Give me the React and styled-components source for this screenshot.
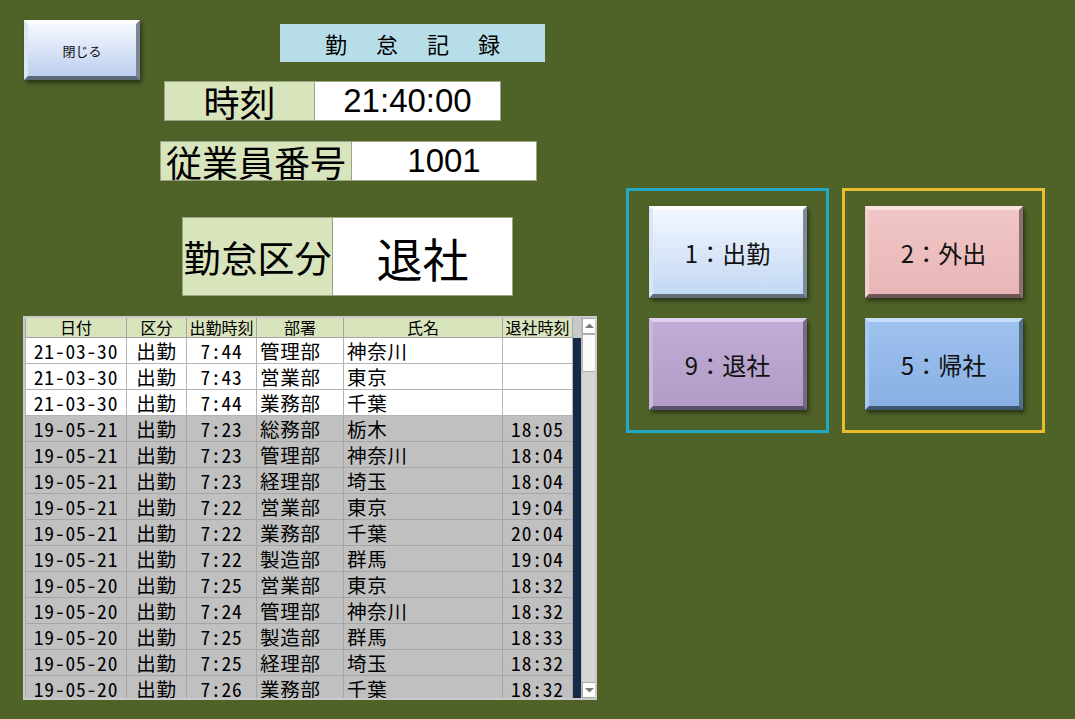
import React from "react";
import styled, { createGlobalStyle } from "styled-components";

const GlobalStyle = createGlobalStyle`
  html, body {
    margin: 0;
    padding: 0;
    background: #4f6228;
  }
  body {
    font-family: "Noto Sans CJK JP", "Liberation Sans", sans-serif;
    color: #000;
  }
`;

const tones = {
  close: { from: "#f6f9ff", to: "#bccfee", hi: "#ffffff", mid: "#dbe5f4", dark: "#7c8696", darker: "#5f6877" },
  ice: { from: "#f2f7fe", to: "#c3d8f3", hi: "#ffffff", mid: "#d9e5f4", dark: "#7f8a99", darker: "#646d7a" },
  rose: { from: "#f1c6c6", to: "#e8b6b6", hi: "#f9e2e2", mid: "#f0cfcf", dark: "#8e7070", darker: "#6e5656" },
  lilac: { from: "#c2acd5", to: "#b09cc6", hi: "#e0d0ec", mid: "#c9b8da", dark: "#75688a", darker: "#5c516d" },
  sky: { from: "#9ec2ef", to: "#89b0e4", hi: "#c6def9", mid: "#a9c8ef", dark: "#53708f", darker: "#3f566f" },
};

const Screen = styled.div`
  width: 1075px;
  height: 719px;
  display: flex;
  overflow: hidden;
  background: #4f6228;
`;

const LeftPane = styled.div`
  width: 600px;
  display: flex;
  flex-direction: column;
`;

const TopBar = styled.div`
  display: flex;
  align-items: flex-start;
  height: 81px;
`;

const BevelButton = styled.button`
  box-sizing: border-box;
  display: flex;
  align-items: center;
  justify-content: center;
  padding: 0;
  border-style: solid;
  border-width: 4px;
  border-color: ${({ $tone }) => `${$tone.hi} ${$tone.dark} ${$tone.darker} ${$tone.mid}`};
  background: linear-gradient(to bottom, ${({ $tone }) => $tone.from}, ${({ $tone }) => $tone.to});
  box-shadow: 2px 3px 4px rgba(0, 0, 0, 0.45);
  font-family: "Noto Sans CJK JP", "Liberation Sans", sans-serif;
  color: #111;
  cursor: pointer;
`;

const CloseButton = styled(BevelButton)`
  width: 116px;
  height: 60px;
  margin: 20px 0 0 24px;
  font-size: 13px;
`;

const Title = styled.div`
  box-sizing: border-box;
  width: 265px;
  height: 38px;
  margin: 24px 0 0 140px;
  padding-left: 12px;
  background: #b7dee8;
  display: flex;
  align-items: center;
  justify-content: center;
  font-size: 22px;
  letter-spacing: 12px;
`;

const InfoRow = styled.div`
  display: flex;
  height: ${({ $h }) => $h}px;
  margin-left: ${({ $x }) => $x}px;
  margin-top: ${({ $top }) => $top}px;
`;

const Label = styled.div`
  box-sizing: border-box;
  width: ${({ $w }) => $w}px;
  background: #d8e4bc;
  border: 1px solid #9aa586;
  display: flex;
  align-items: center;
  justify-content: center;
  font-size: ${({ $size }) => $size}px;
  white-space: nowrap;
`;

const Value = styled.div`
  box-sizing: border-box;
  width: ${({ $w }) => $w}px;
  background: #fff;
  border: 1px solid #9aa586;
  border-left: none;
  display: flex;
  align-items: center;
  justify-content: center;
  font-family: "Liberation Sans", "Noto Sans CJK JP", sans-serif;
  font-size: ${({ $size }) => $size}px;
`;

const TableFrame = styled.div`
  box-sizing: border-box;
  width: 574px;
  height: 384px;
  margin: 20px 0 0 23px;
  border: 2px solid #cacaca;
  display: flex;
  overflow: hidden;
  background: #c0c0c0;
`;

const Grid = styled.table`
  border-collapse: collapse;
  table-layout: fixed;
  width: 547px;
  flex: none;
  align-self: flex-start;
`;

const HeadCell = styled.th`
  height: 19px;
  padding: 0;
  background: #d8e4bc;
  border: 1px solid #a4a4a4;
  border-top: none;
  font-size: 16px;
  font-weight: normal;
  line-height: 19px;
  white-space: nowrap;
`;

const Cell = styled.td`
  height: 25px;
  padding: 0 3px;
  background: ${({ $fresh }) => ($fresh ? "#ffffff" : "#c0c0c0")};
  border: 1px solid ${({ $fresh }) => ($fresh ? "#b4b4b4" : "#a6a6a6")};
  text-align: ${({ $align }) => $align || "center"};
  font-family: "Noto Sans CJK JP", sans-serif;
  font-feature-settings: "hwid";
  font-size: 19.5px;
  letter-spacing: 0.8px;
  line-height: 24px;
  white-space: nowrap;
`;

const Strip = styled.div`
  width: 8px;
  flex: none;
  display: flex;
  flex-direction: column;
`;

const StripHead = styled.div`
  height: 20px;
  background: #c8c8c8;
`;

const StripBody = styled.div`
  flex: 1;
  background: #172a48;
`;

const ScrollTrack = styled.div`
  width: 15px;
  flex: none;
  display: flex;
  flex-direction: column;
  background: #d6d6d6;
  border-left: 1px solid #bdbdbd;
`;

const ScrollArrow = styled.div`
  box-sizing: border-box;
  height: 16px;
  background: #fff;
  border: 1px solid #a8a8a8;
  display: flex;
  align-items: center;
  justify-content: center;
`;

const ScrollThumb = styled.div`
  box-sizing: border-box;
  height: 38px;
  background: #fafafa;
  border: 1px solid #b4b4b4;
`;

const ScrollGap = styled.div`
  flex: 1;
`;

const RightPane = styled.div`
  display: flex;
  align-items: flex-start;
  gap: 13px;
  padding: 188px 0 0 26px;
`;

const Group = styled.div`
  box-sizing: border-box;
  width: 203px;
  height: 245px;
  border: 3px solid ${({ $color }) => $color};
  display: flex;
  flex-direction: column;
  align-items: center;
  gap: 20px;
  padding-top: 15px;
`;

const ActionButton = styled(BevelButton)`
  width: 158px;
  height: 92px;
  font-size: 24px;
`;

const records = [
  ["21-03-30", "出勤", "7:44", "管理部", "神奈川", ""],
  ["21-03-30", "出勤", "7:43", "営業部", "東京", ""],
  ["21-03-30", "出勤", "7:44", "業務部", "千葉", ""],
  ["19-05-21", "出勤", "7:23", "総務部", "栃木", "18:05"],
  ["19-05-21", "出勤", "7:23", "管理部", "神奈川", "18:04"],
  ["19-05-21", "出勤", "7:23", "経理部", "埼玉", "18:04"],
  ["19-05-21", "出勤", "7:22", "営業部", "東京", "19:04"],
  ["19-05-21", "出勤", "7:22", "業務部", "千葉", "20:04"],
  ["19-05-21", "出勤", "7:22", "製造部", "群馬", "19:04"],
  ["19-05-20", "出勤", "7:25", "営業部", "東京", "18:32"],
  ["19-05-20", "出勤", "7:24", "管理部", "神奈川", "18:32"],
  ["19-05-20", "出勤", "7:25", "製造部", "群馬", "18:33"],
  ["19-05-20", "出勤", "7:25", "経理部", "埼玉", "18:32"],
  ["19-05-20", "出勤", "7:26", "業務部", "千葉", "18:32"],
];

const columns = [
  { title: "日付", width: 101 },
  { title: "区分", width: 60 },
  { title: "出勤時刻", width: 70 },
  { title: "部署", width: 87, align: "left" },
  { title: "氏名", width: 159, align: "left" },
  { title: "退社時刻", width: 70 },
];

const Arrow = ({ down }) => (
  <svg width="9" height="6" viewBox="0 0 9 6">
    <polygon points={down ? "0,1 9,1 4.5,5.5" : "0,5 9,5 4.5,0.5"} fill="#7a7a7a" />
  </svg>
);

const AttendanceTable = () => (
  <TableFrame>
    <Grid>
      <colgroup>
        {columns.map((c) => (
          <col key={c.title} style={{ width: c.width }} />
        ))}
      </colgroup>
      <thead>
        <tr>
          {columns.map((c) => (
            <HeadCell key={c.title}>{c.title}</HeadCell>
          ))}
        </tr>
      </thead>
      <tbody>
        {records.map((row, i) => (
          <tr key={i}>
            {row.map((v, j) => (
              <Cell key={j} $fresh={i < 3} $align={columns[j].align}>
                {v}
              </Cell>
            ))}
          </tr>
        ))}
      </tbody>
    </Grid>
    <Strip>
      <StripHead />
      <StripBody />
    </Strip>
    <ScrollTrack>
      <ScrollArrow>
        <Arrow />
      </ScrollArrow>
      <ScrollThumb />
      <ScrollGap />
      <ScrollArrow>
        <Arrow down />
      </ScrollArrow>
    </ScrollTrack>
  </TableFrame>
);

export default function App() {
  return (
    <>
      <GlobalStyle />
      <Screen>
        <LeftPane>
          <TopBar>
            <CloseButton $tone={tones.close}>閉じる</CloseButton>
            <Title>勤 怠 記 録</Title>
          </TopBar>
          <InfoRow $x={164} $top={0} $h={40}>
            <Label $w={151} $size={36}>時刻</Label>
            <Value $w={186} $size={33}>21:40:00</Value>
          </InfoRow>
          <InfoRow $x={160} $top={20} $h={40}>
            <Label $w={192} $size={36}>従業員番号</Label>
            <Value $w={185} $size={33}>1001</Value>
          </InfoRow>
          <InfoRow $x={182} $top={36} $h={79}>
            <Label $w={151} $size={37}>勤怠区分</Label>
            <Value $w={180} $size={46}>退社</Value>
          </InfoRow>
          <AttendanceTable />
        </LeftPane>
        <RightPane>
          <Group $color="#22a9c6">
            <ActionButton $tone={tones.ice}>1：出勤</ActionButton>
            <ActionButton $tone={tones.lilac}>9：退社</ActionButton>
          </Group>
          <Group $color="#e6bd2c">
            <ActionButton $tone={tones.rose}>2：外出</ActionButton>
            <ActionButton $tone={tones.sky}>5：帰社</ActionButton>
          </Group>
        </RightPane>
      </Screen>
    </>
  );
}
